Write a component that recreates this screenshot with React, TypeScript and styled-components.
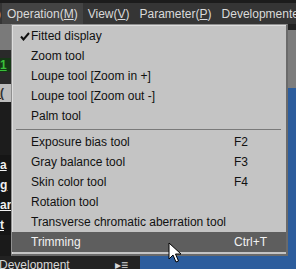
import React from "react";
import styled, { createGlobalStyle } from "styled-components";

const Global = createGlobalStyle`
  html, body { margin: 0; padding: 0; background: #1e1e1e; }
  body { font-family: "Liberation Sans", Arial, sans-serif; }
`;

const Screen = styled.div`
  position: relative;
  width: 296px;
  height: 269px;
  overflow: hidden;
  display: flex;
  flex-direction: column;
  background: #1e1e1e;
`;

const TopStrip = styled.div`
  height: 3px;
  background: #1c1c1c;
`;

const MenuBar = styled.div`
  height: 21px;
  display: flex;
  align-items: center;
  background: #353535;
  color: #dadada;
  font-size: 12px;
  white-space: nowrap;
`;

const BarItem = styled.div<{ $active?: boolean }>`
  height: 100%;
  display: flex;
  align-items: center;
  padding: 0 5px;
  background: ${(p) => (p.$active ? "#444444" : "transparent")};
`;

const EdgeItem = styled(BarItem)`
  padding: 0 1px 0 0;
  margin-left: -3px;
`;

const Under = styled.span`
  text-decoration: underline;
`;

const Body = styled.div`
  flex: 1;
  display: flex;
  min-height: 0;
`;

const LeftPanel = styled.div`
  width: 140px;
  display: flex;
  flex-direction: column;
  background: #1a1a1a;
`;

const Thumb = styled.div<{ $h: number; $bg: string; $fg?: string }>`
  height: ${(p) => p.$h}px;
  width: 12px;
  flex-shrink: 0;
  background: ${(p) => p.$bg};
  color: ${(p) => p.$fg || "#f0f0f0"};
  font-size: 12px;
  font-weight: bold;
  overflow: hidden;
  text-decoration: underline;
  line-height: ${(p) => p.$h}px;
`;

const PanelFooter = styled.div`
  margin-top: auto;
  height: 11px;
  flex-shrink: 0;
  display: flex;
  align-items: flex-start;
  justify-content: space-between;
  padding: 2px 12px 0 0;
  color: #d8d8d8;
  font-size: 12px;
  line-height: 14px;
  background: #222;
  margin-left: -1px;
  overflow: hidden;
`;

const Main = styled.div`
  flex: 1;
  display: flex;
  flex-direction: column;
  background: #2c5d9d;
`;

const MainTop = styled.div`
  height: 6px;
  background: #222;
`;

const MainGray = styled.div`
  height: 58px;
  background: #7d7d7d;
`;

const Dropdown = styled.div`
  position: absolute;
  left: 11px;
  top: 24px;
  width: 274px;
  background: #c4c4c4;
  border: 1px solid #909090;
  border-right: 2px solid #6a6a6a;
  border-bottom: 2px solid #6a6a6a;
  box-shadow: inset 1px 1px 0 #dedede;
  padding: 1px 0 2px;
  font-size: 12px;
  color: #111;
`;

const Item = styled.div<{ $hl?: boolean }>`
  height: 20px;
  display: grid;
  grid-template-columns: 18px 1fr 52px;
  align-items: center;
  background: ${(p) => (p.$hl ? "#5e5e5e" : "transparent")};
  color: ${(p) => (p.$hl ? "#f2f2f2" : "#111")};
  white-space: nowrap;
`;

const Check = styled.span`
  display: flex;
  justify-content: flex-end;
`;

const Label = styled.span`
  padding-left: 1px;
`;

const Shortcut = styled.span``;

const Sep = styled.div`
  height: 6px;
  display: flex;
  align-items: center;
  padding: 0 5px 0 4px;
  &::after {
    content: "";
    flex: 1;
    height: 1px;
    background: #7a7a7a;
  }
`;

const Cursor = styled.svg`
  position: absolute;
  left: 168px;
  top: 242px;
`;

const CheckIcon = () => (
  <svg width="10" height="9" viewBox="0 0 10 9">
    <path d="M1 4.5 L3.5 7.5 L9 1" stroke="#111" strokeWidth="2" fill="none" />
  </svg>
);

type Entry = { label: string; sc?: string; check?: boolean; hl?: boolean } | "sep";

const entries: Entry[] = [
  { label: "Fitted display", check: true },
  { label: "Zoom tool" },
  { label: "Loupe tool [Zoom in +]" },
  { label: "Loupe tool [Zoom out -]" },
  { label: "Palm tool" },
  "sep",
  { label: "Exposure bias tool", sc: "F2" },
  { label: "Gray balance tool", sc: "F3" },
  { label: "Skin color tool", sc: "F4" },
  { label: "Rotation tool" },
  { label: "Transverse chromatic aberration tool" },
  { label: "Trimming", sc: "Ctrl+T", hl: true },
];

export default function App() {
  return (
    <Screen>
      <Global />
      <TopStrip />
      <MenuBar>
        <EdgeItem>)</EdgeItem>
        <BarItem $active>
          Operation(<Under>M</Under>)
        </BarItem>
        <BarItem>
          View(<Under>V</Under>)
        </BarItem>
        <BarItem>
          Parameter(<Under>P</Under>)
        </BarItem>
        <BarItem>Developmente</BarItem>
      </MenuBar>
      <Body>
        <LeftPanel>
          <Thumb $h={26} $bg="#7a7a7a" />
          <Thumb $h={8} $bg="#2a2a2a" />
          <Thumb $h={14} $bg="#163816" $fg="#3ac13a">1</Thumb>
          <Thumb $h={12} $bg="#2a2a2a" />
          <Thumb $h={18} $bg="#bdbdbd" $fg="#333">(</Thumb>
          <Thumb $h={53} $bg="#1c1c1c" />
          <Thumb $h={20} $bg="#151515">a</Thumb>
          <Thumb $h={20} $bg="#151515">g</Thumb>
          <Thumb $h={20} $bg="#151515">ar</Thumb>
          <Thumb $h={20} $bg="#151515">t</Thumb>
          <PanelFooter>
            <span>Development</span>
            <span>▸≡</span>
          </PanelFooter>
        </LeftPanel>
        <Main>
          <MainTop />
          <MainGray />
        </Main>
      </Body>
      <Dropdown>
        {entries.map((e, i) =>
          e === "sep" ? (
            <Sep key={i} />
          ) : (
            <Item key={i} $hl={e.hl}>
              <Check>{e.check ? <CheckIcon /> : null}</Check>
              <Label>{e.label}</Label>
              <Shortcut>{e.sc}</Shortcut>
            </Item>
          )
        )}
      </Dropdown>
      <Cursor width="14" height="22" viewBox="0 0 14 22">
        <path d="M1 1 L1 17 L5 13 L8 20 L10.5 19 L7.5 12 L13 12 Z" fill="#fff" stroke="#000" strokeWidth="1" />
      </Cursor>
    </Screen>
  );
}
